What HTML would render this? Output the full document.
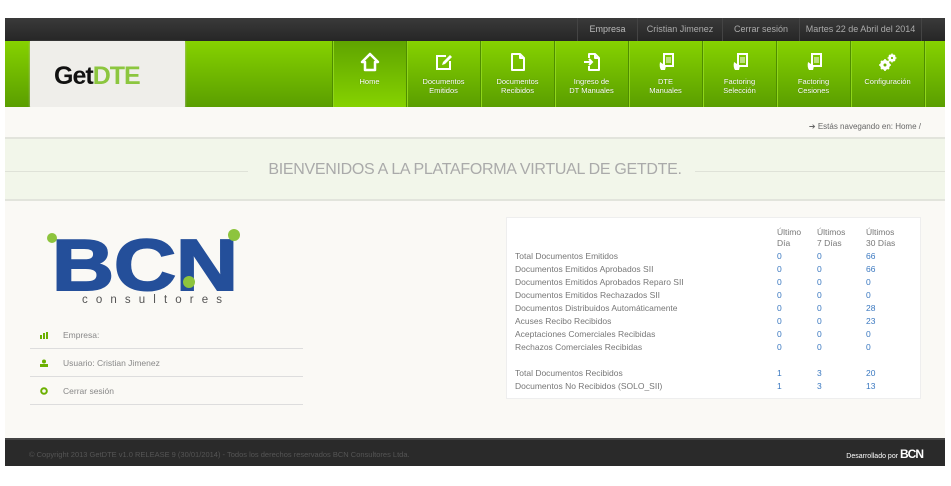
<!DOCTYPE html>
<html><head><meta charset="utf-8"><style>
*{margin:0;padding:0;box-sizing:border-box}
body{width:951px;height:486px;background:#fff;font-family:"Liberation Sans",Arial,sans-serif;position:relative;overflow:hidden}
.a{position:absolute}
#top{left:5px;top:18px;width:940px;height:23px;background:linear-gradient(#3a3a3a,#262626)}
.tl{position:absolute;top:0;height:23px;line-height:23px;font-size:9px;color:#aaa;text-align:center;border-left:1px solid #444}
#nav{left:5px;top:41px;width:940px;height:66px;background:linear-gradient(#86d200,#5a9e00)}
.ni{position:absolute;top:0;height:66px;width:74px;border-left:1px solid #4f8d00;box-shadow:inset 1px 0 0 #8fd61a;color:#fff;font-size:7.5px;text-align:center;line-height:8.5px;text-shadow:0 0 1px rgba(0,0,0,.3)}
.ni svg{display:block;margin:11px auto 6px}
.ni.h{background:linear-gradient(#5fa400,#86d200)}
#logo{left:30px;top:41px;width:155px;height:69px;background:#efeeea;border-radius:0 0 4px 4px;box-shadow:0 1px 2px #bbb}
#main{left:5px;top:107px;width:940px;height:331px;background:#faf9f5}
#band{left:5px;top:137px;width:940px;height:64px;background:#f2f6ea;border-top:2px solid #e2e4dc;border-bottom:2px solid #e2e4dc}
#foot{left:5px;top:438px;width:940px;height:28px;background:#2a2a2a;border-top:2px solid #444}
.mi{position:absolute;left:30px;width:273px;height:28px;border-bottom:1px solid #ddd;font-size:8.5px;color:#888;line-height:28px}
.mi span{position:absolute;left:33px}
#tb{left:506px;top:217px;width:415px;height:182px;background:#fff;border:1px solid #eee}
.r{position:absolute;font-size:8.5px;color:#777;white-space:nowrap}
.b{color:#3a78c0}
</style></head><body>
<div id="top" class="a">
<div class="tl" style="left:572px;width:60px;color:#bbb">Empresa</div>
<div class="tl" style="left:632px;width:85px">Cristian Jimenez</div>
<div class="tl" style="left:717px;width:77px">Cerrar sesión</div>
<div class="tl" style="left:794px;width:122px">Martes 22 de Abril del 2014</div>
<div class="tl" style="left:916px;width:1px"></div>
</div>
<div id="nav" class="a">
<div class="ni h" style="left:327px"><svg width="20" height="20" viewBox="0 0 20 20"><path d="M10 2 L18 10 H15 V18 H5 V10 H2 Z" fill="none" stroke="#fff" stroke-width="2.5" stroke-linejoin="round"/></svg>Home</div>
<div class="ni" style="left:401px"><svg width="20" height="20" viewBox="0 0 20 20"><path d="M12 4H3V17H16V9" fill="none" stroke="#fff" stroke-width="2"/><path d="M8 13 L9 10 L16 3 L18 5 L11 12 Z" fill="#fff"/></svg>Documentos<br>Emitidos</div>
<div class="ni" style="left:475px"><svg width="20" height="20" viewBox="0 0 20 20"><path d="M4 2H12L16 6V18H4Z M12 2V6H16" fill="none" stroke="#fff" stroke-width="2" stroke-linejoin="round"/></svg>Documentos<br>Recibidos</div>
<div class="ni" style="left:549px"><svg width="20" height="20" viewBox="0 0 20 20"><path d="M7 6V2H13L17 6V18H7V14 M13 2V6H17" fill="none" stroke="#fff" stroke-width="2" stroke-linejoin="round"/><path d="M2 10H10 M7 7L10 10L7 13" fill="none" stroke="#fff" stroke-width="2"/></svg>Ingreso de<br>DT Manuales</div>
<div class="ni" style="left:623px"><svg width="20" height="20" viewBox="0 0 20 20"><rect x="8" y="2" width="9" height="12" fill="none" stroke="#fff" stroke-width="2"/><path d="M10 6H15M10 8H15M10 10H15" stroke="#fff"/><path d="M4 10 Q3 15 5 18 H9 L10 14 Z" fill="#fff"/></svg>DTE<br>Manuales</div>
<div class="ni" style="left:697px"><svg width="20" height="20" viewBox="0 0 20 20"><rect x="8" y="2" width="9" height="12" fill="none" stroke="#fff" stroke-width="2"/><path d="M10 6H15M10 8H15M10 10H15" stroke="#fff"/><path d="M4 10 Q3 15 5 18 H9 L10 14 Z" fill="#fff"/></svg>Factoring<br>Selección</div>
<div class="ni" style="left:771px"><svg width="20" height="20" viewBox="0 0 20 20"><rect x="8" y="2" width="9" height="12" fill="none" stroke="#fff" stroke-width="2"/><path d="M10 6H15M10 8H15M10 10H15" stroke="#fff"/><path d="M4 10 Q3 15 5 18 H9 L10 14 Z" fill="#fff"/></svg>Factoring<br>Cesiones</div>
<div class="ni" style="left:845px"><svg width="20" height="20" viewBox="0 0 20 20"><circle cx="7" cy="13" r="3.5" fill="none" stroke="#fff" stroke-width="3"/><circle cx="14" cy="6" r="2.5" fill="none" stroke="#fff" stroke-width="2.5"/><path d="M7 7V19M1 13H13M3 9L11 17M11 9L3 17" stroke="#fff" stroke-width="1.6"/><path d="M14 1.5V10.5M9.5 6H18.5M11 3L17 9M17 3L11 9" stroke="#fff" stroke-width="1.3"/><circle cx="7" cy="13" r="1.5" fill="#6cb400"/><circle cx="14" cy="6" r="1.1" fill="#74bc00"/></svg>Configuración</div>
<div class="ni" style="left:919px;width:21px"></div>
</div>
<div id="logo" class="a"><div class="a" style="left:24px;top:21px;font-size:25px;font-weight:bold;letter-spacing:-1px;color:#111">Get<span style="color:#8cc63f">DTE</span></div></div>
<div id="main" class="a"></div>
<div class="a" style="right:30px;top:122px;font-size:8px;color:#666">➔ Estás navegando en: Home /</div>
<div id="band" class="a">
<div class="a" style="left:0;top:32px;width:243px;height:1px;background:#dfe2d8"></div>
<div class="a" style="left:690px;top:32px;width:250px;height:1px;background:#dfe2d8"></div>
<div class="a" style="left:0;width:940px;top:22px;text-align:center;font-size:16px;color:#aaa;letter-spacing:-.3px">BIENVENIDOS A LA PLATAFORMA VIRTUAL DE GETDTE.</div>
</div>
<svg class="a" style="left:45px;top:226px" width="200" height="80" viewBox="0 0 200 80">
<text x="7" y="64" font-family="Liberation Sans" font-weight="bold" font-size="72" fill="#244f9a" stroke="#244f9a" stroke-width="2" textLength="186" lengthAdjust="spacingAndGlyphs">BCN</text>
<circle cx="7" cy="12" r="5" fill="#8dc43d"/><circle cx="189" cy="9" r="6" fill="#8dc43d"/><circle cx="144" cy="56" r="6" fill="#8dc43d"/>
<text x="37" y="77" font-family="Liberation Sans" font-size="11.5" fill="#555" textLength="140" lengthAdjust="spacing">consultores</text>
</svg>
<div class="mi" style="top:321px"><svg class="a" style="left:10px;top:11px" width="8" height="7"><rect x="0" y="3" width="2" height="4" fill="#6bb000"/><rect x="3" y="1" width="2" height="6" fill="#6bb000"/><rect x="6" y="0" width="2" height="7" fill="#6bb000"/></svg><span>Empresa:</span></div>
<div class="mi" style="top:349px"><svg class="a" style="left:10px;top:10px" width="8" height="8"><circle cx="4" cy="2.5" r="2" fill="#6bb000"/><rect x="0" y="5" width="8" height="3" fill="#6bb000"/></svg><span>Usuario: Cristian Jimenez</span></div>
<div class="mi" style="top:377px"><svg class="a" style="left:10px;top:10px" width="8" height="8"><circle cx="4" cy="4" r="2.8" fill="none" stroke="#6bb000" stroke-width="2"/></svg><span>Cerrar sesión</span></div>
<div id="tb" class="a"></div>
<div class="r" style="left:777px;top:227px;line-height:11px">Último<br>Día</div>
<div class="r" style="left:817px;top:227px;line-height:11px">Últimos<br>7 Días</div>
<div class="r" style="left:866px;top:227px;line-height:11px">Últimos<br>30 Días</div>
<div class="r" style="left:515px;top:250px;line-height:13px">Total Documentos Emitidos<br>Documentos Emitidos Aprobados SII<br>Documentos Emitidos Aprobados Reparo SII<br>Documentos Emitidos Rechazados SII<br>Documentos Distribuidos Automáticamente<br>Acuses Recibo Recibidos<br>Aceptaciones Comerciales Recibidas<br>Rechazos Comerciales Recibidas<br><br>Total Documentos Recibidos<br>Documentos No Recibidos (SOLO_SII)</div>
<div class="r b" style="left:777px;top:250px;line-height:13px">0<br>0<br>0<br>0<br>0<br>0<br>0<br>0<br><br>1<br>1</div>
<div class="r b" style="left:817px;top:250px;line-height:13px">0<br>0<br>0<br>0<br>0<br>0<br>0<br>0<br><br>3<br>3</div>
<div class="r b" style="left:866px;top:250px;line-height:13px">66<br>66<br>0<br>0<br>28<br>23<br>0<br>0<br><br>20<br>13</div>
<div id="foot" class="a">
<div class="a" style="left:24px;top:10px;font-size:7.5px;color:#555">© Copyright 2013 GetDTE v1.0 RELEASE 9 (30/01/2014) - Todos los derechos reservados BCN Consultores Ltda.</div>
<div class="a" style="right:22px;top:7px;font-size:7px;color:#fff;white-space:nowrap">Desarrollado por <b style="font-size:12px;letter-spacing:-1px">BCN</b></div>
</div>
</body></html>
